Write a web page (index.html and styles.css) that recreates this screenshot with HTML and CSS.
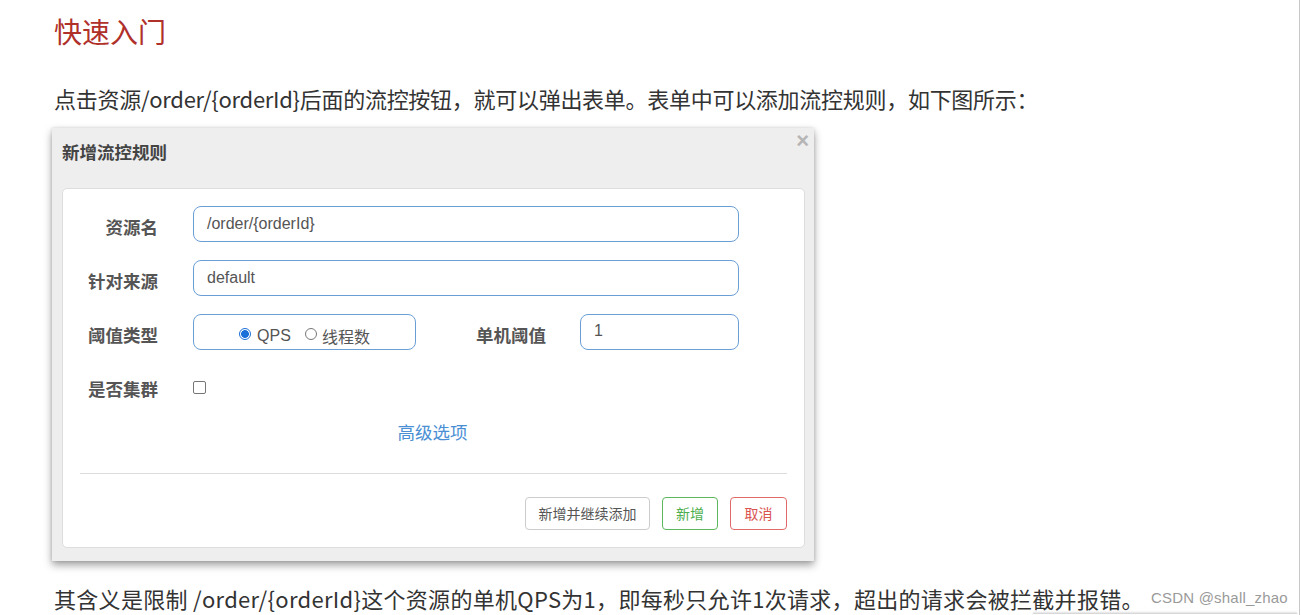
FILE: index.html
```html
<!DOCTYPE html>
<html lang="zh-CN">
<head>
<meta charset="utf-8">
<title>快速入门</title>
<link rel="stylesheet" href="styles.css">
</head>
<body>
<div class="page">
  <div class="article">
    <h2 class="title">快速入门</h2>
    <p class="para para-first">点击资源/order/{orderId}后面的流控按钮，就可以弹出表单。表单中可以添加流控规则，如下图所示：</p>

    <div class="dialog">
      <div class="dlg-head">新增流控规则</div>
      <span class="dlg-close">×</span>
      <div class="dlg-body">
        <div class="row">
          <label class="lbl">资源名</label>
          <div class="input input-wide">/order/{orderId}</div>
        </div>
        <div class="row">
          <label class="lbl">针对来源</label>
          <div class="input input-wide">default</div>
        </div>
        <div class="row">
          <label class="lbl">阈值类型</label>
          <div class="radio-box">
            <span class="radio radio-on"></span><span class="radio-text">QPS</span>
            <span class="radio radio-off"></span><span class="radio-text cjk">线程数</span>
          </div>
          <label class="lbl lbl-second">单机阈值</label>
          <div class="input input-small">1</div>
        </div>
        <div class="row row-last">
          <label class="lbl">是否集群</label>
          <span class="checkbox"></span>
        </div>
        <div class="adv"><a class="adv-link">高级选项</a></div>
        <div class="divider"></div>
        <div class="actions">
          <button class="btn btn-default">新增并继续添加</button>
          <button class="btn btn-ok">新增</button>
          <button class="btn btn-cancel">取消</button>
        </div>
      </div>
    </div>

    <p class="para para-last">其含义是限制 /order/{orderId}这个资源的单机QPS为1，即每秒只允许1次请求，超出的请求会被拦截并报错。</p>
  </div>
  <span class="watermark">CSDN @shall_zhao</span>
  <div class="edge"></div>
</div>
</body>
</html>
```

FILE: styles.css
```css
html, body {
  margin: 0;
  padding: 0;
  background: #ffffff;
}

body {
  font-family: "Noto Sans CJK SC", "Liberation Sans", sans-serif;
  color: #333;
}

.page {
  position: relative;
  width: 1300px;
  height: 615px;
  box-sizing: border-box;
  border-right: 1px solid #c8c8c8;
  overflow: hidden;
}

.article {
  padding-left: 54px;
}

.title {
  margin: 13px 0 0;
  font-size: 28px;
  line-height: 36px;
  font-weight: normal;
  color: #b0302a;
}

.para {
  margin: 0;
  font-size: 22px;
  line-height: 30px;
  color: #333;
  white-space: nowrap;
}

.para-first {
  margin-top: 34px;
  letter-spacing: -0.28px;
}

.para-last {
  margin-top: 23px;
  line-height: 28px;
  letter-spacing: 0.3px;
}

/* dialog */
.dialog {
  position: relative;
  width: 762px;
  margin: 15px 0 0 -2px;
  background: #eeeeee;
  padding-bottom: 13px;
  box-shadow: 0 4px 8px rgba(0, 0, 0, 0.38), 0 0 3px rgba(0, 0, 0, 0.12);
}

.dlg-head {
  height: 60px;
  box-sizing: border-box;
  padding: 12px 10px 0;
  line-height: 24px;
  font-size: 17.5px;
  font-weight: bold;
  color: #444;
}

.dlg-close {
  position: absolute;
  top: 2px;
  right: 5px;
  font-family: "Liberation Sans", sans-serif;
  font-size: 22px;
  line-height: 22px;
  font-weight: bold;
  color: #b5b5b5;
}

.dlg-body {
  margin: 0 9px 0 10px;
  background: #fff;
  border: 1px solid #dddddd;
  border-radius: 5px;
  padding: 17px 17px 17px 17px;
}

.row {
  display: flex;
  align-items: center;
  height: 36px;
  margin-bottom: 18px;
}

.row-last {
  margin-bottom: 0;
}

.lbl {
  width: 78px;
  flex: none;
  margin-right: 35px;
  text-align: right;
  font-size: 17.5px;
  font-weight: bold;
  color: #555;
  line-height: 36px;
  padding-top: 5px;
  box-sizing: border-box;
}

.lbl-second {
  width: 70px;
  margin-left: 60px;
  margin-right: 34px;
}

.input {
  height: 36px;
  box-sizing: border-box;
  border: 1px solid #6a9fd6;
  border-radius: 8px;
  padding: 0 13px;
  font-family: "Liberation Sans", sans-serif;
  font-size: 16px;
  line-height: 34px;
  color: #555;
}

.input-wide {
  width: 546px;
}

.input-small {
  width: 159px;
  line-height: 32px;
}

.radio-box {
  width: 223px;
  height: 36px;
  box-sizing: border-box;
  border: 1px solid #6a9fd6;
  border-radius: 8px;
  display: flex;
  align-items: center;
  justify-content: center;
  padding-top: 7px;
}

.radio {
  width: 12px;
  height: 12px;
  box-sizing: border-box;
  border-radius: 50%;
  flex: none;
  margin-top: -4px;
}

.radio-on {
  border: 1px solid #1b6fd8;
  background: radial-gradient(circle, #1b6fd8 0 3.6px, #fff 4.2px);
}

.radio-off {
  border: 1px solid #777;
  background: #fff;
  margin-left: 14px;
}

.radio-text {
  margin-left: 6px;
  font-family: "Liberation Sans", "Noto Sans CJK SC", sans-serif;
  font-size: 16px;
  color: #555;
}

.radio-text.cjk {
  margin-left: 5px;
  font-family: "Noto Sans CJK SC", sans-serif;
}

.checkbox {
  width: 13px;
  height: 13px;
  box-sizing: border-box;
  border: 1px solid #767676;
  border-radius: 2px;
  margin-top: 3px;
}

.adv {
  text-align: center;
  line-height: 24px;
  margin-top: 16px;
  padding-right: 2px;
}

.adv-link {
  font-size: 17.5px;
  color: #4a8fd4;
}

.divider {
  height: 1px;
  background: #dcdcdc;
  margin-top: 29px;
}

.actions {
  display: flex;
  justify-content: flex-end;
  gap: 12px;
  margin-top: 23px;
}

.btn {
  height: 33px;
  box-sizing: border-box;
  padding: 0;
  background: #fff;
  border-radius: 4px;
  font-family: "Noto Sans CJK SC", sans-serif;
  font-size: 14px;
  line-height: 31px;
}

.btn-default {
  width: 125px;
  border: 1px solid #cccccc;
  color: #555;
}

.btn-ok {
  width: 56px;
  border: 1px solid #5cb85c;
  color: #4cae4c;
}

.btn-cancel {
  width: 57px;
  border: 1px solid #e06a6a;
  color: #d9534f;
}

/* overlays */
.watermark {
  position: absolute;
  left: 1151px;
  top: 588px;
  font-family: "Liberation Sans", sans-serif;
  font-size: 15px;
  line-height: 20px;
  color: #9a9a9a;
  letter-spacing: 0.2px;
}

.edge {
  position: absolute;
  left: 1033px;
  right: 2px;
  top: 613px;
  height: 4px;
  border-top: 1px solid #d8d8d8;
  box-shadow: 0 -1px 2px rgba(0, 0, 0, 0.12);
}
```
